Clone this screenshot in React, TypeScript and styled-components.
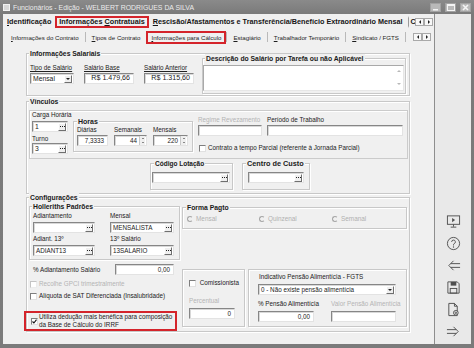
import React from "react";
import styled, { createGlobalStyle } from "styled-components";

const GlobalStyle = createGlobalStyle`
  html, body { margin: 0; padding: 0; }
  body {
    background: #7b7b7b;
    font-family: "Liberation Sans", Arial, sans-serif;
    color: #1e1e1e;
  }
  * { box-sizing: border-box; }
`;

type Dir = "up" | "down" | "left" | "right";

const Window = styled.div`
  width: 474px;
  height: 348px;
  display: flex;
  flex-direction: column;
  background: linear-gradient(#8a8a8a, #7a7a7a 14px, #7b7b7b);
  padding: 0 3px 4px 3px;
  overflow: hidden;
`;

const TitleBar = styled.div`
  height: 14px;
  flex: none;
  display: flex;
  align-items: center;
  gap: 3px;
`;

const AppIcon = styled.span`
  width: 7px;
  height: 7px;
  background: #d8d8d8;
  border: 1px solid #f2f2f2;
  flex: none;
`;

const Title = styled.span`
  color: #ececec;
  font-size: 6.9px;
  white-space: nowrap;
`;

const WinButtons = styled.div`
  margin-left: auto;
  display: flex;
  gap: 4px;
`;

const WinBtn = styled.span`
  width: 11px;
  height: 9px;
  background: #b9b9b9;
  border: 1px solid #a2a2a2;
  display: flex;
  align-items: center;
  justify-content: center;
`;

const Body = styled.div`
  flex: 1;
  display: flex;
  min-height: 0;
`;

const Main = styled.div`
  width: 431px;
  flex: none;
  background: #f0f0f0;
  display: flex;
  flex-direction: column;
`;

const Side = styled.div`
  flex: 1;
  background: #e9e9e9;
  border-left: 1px solid #8e8e8e;
  display: flex;
  flex-direction: column;
  justify-content: flex-end;
  padding-bottom: 2px;
`;

const SideIcon = styled.div`
  height: 22px;
  display: flex;
  align-items: center;
  justify-content: center;
  color: #4f4f4f;
`;

/* tabs */

const TabStrip = styled.div<{ $h: number }>`
  height: ${(p) => p.$h}px;
  flex: none;
  display: flex;
  align-items: center;
`;

const TabList = styled.div`
  flex: 1;
  display: flex;
  align-items: center;
  overflow: hidden;
  min-width: 0;
`;

const MainTab = styled.div<{ $active?: boolean; $divider?: boolean }>`
  flex: none;
  height: 12px;
  display: flex;
  align-items: center;
  padding: 0 2px;
  border: 2px solid ${(p) => (p.$active ? "#d4242b" : "transparent")};
  ${(p) => p.$divider && "border-left: 1px solid #9a9a9a; margin-left: 1px;"}
  font-weight: bold;
  font-size: 7.25px;
  white-space: nowrap;
  color: #151515;
`;

const SubTab = styled.div<{ $active?: boolean; $first?: boolean }>`
  flex: none;
  height: 13px;
  display: flex;
  align-items: center;
  padding: 0 ${(p) => (p.$active ? 3 : 6)}px;
  ${(p) => p.$first && "padding-left: 8px;"}
  border: ${(p) => (p.$active ? "2px solid #d4242b" : "none")};
  font-size: 6.15px;
  white-space: nowrap;
`;

const TabSep = styled.span`
  flex: none;
  width: 1px;
  height: 10px;
  background: #b9b9b9;
`;

const Scroller = styled.div<{ $mr: number }>`
  flex: none;
  display: flex;
  margin-right: ${(p) => p.$mr}px;
`;

const ScrollBtn = styled.span`
  width: 9px;
  height: 8px;
  background: #f8f8f8;
  border: 1px solid #a9a9a9;
  display: flex;
  align-items: center;
  justify-content: center;
`;

const Tri = styled.span<{ $dir: Dir; $s?: number; $c?: string }>`
  flex: none;
  width: 0;
  height: 0;
  border: ${(p) => p.$s ?? 2}px solid transparent;
  ${(p) => {
    const c = p.$c ?? "#222";
    switch (p.$dir) {
      case "down":
        return `border-top-color: ${c}; border-bottom-width: 0;`;
      case "up":
        return `border-bottom-color: ${c}; border-top-width: 0;`;
      case "left":
        return `border-right-color: ${c}; border-left-width: 0;`;
      default:
        return `border-left-color: ${c}; border-right-width: 0;`;
    }
  }}
`;

/* groups and fields */

const Content = styled.div`
  padding-left: 23px;
  display: flex;
  flex-direction: column;
`;

const Group = styled.div`
  position: relative;
  flex: none;
  border: 1px solid #c8c8c8;
  box-shadow: inset 1px 1px 0 #fff, 1px 1px 0 #fff;
`;

const Caption = styled.span<{ $x?: number; $fs?: number }>`
  position: absolute;
  top: -5px;
  left: ${(p) => p.$x ?? 2}px;
  padding: 0 1px;
  background: #f0f0f0;
  font-weight: bold;
  font-size: ${(p) => p.$fs ?? 6.8}px;
  line-height: 9px;
  white-space: nowrap;
  color: #1a1a1a;
`;

const Label = styled.div<{ $disabled?: boolean; $u?: boolean; $w?: number }>`
  font-size: 6.3px;
  line-height: 8px;
  white-space: nowrap;
  color: ${(p) => (p.$disabled ? "#b4b4b4" : "#222")};
  ${(p) => p.$u && "text-decoration: underline;"}
  ${(p) => p.$w && `width: ${p.$w}px; flex: none; padding-left: 6px;`}
`;

const Field = styled.div<{ $gap?: number; $mt?: number }>`
  display: flex;
  flex-direction: column;
  gap: ${(p) => p.$gap ?? 1}px;
  margin-top: ${(p) => p.$mt ?? 0}px;
`;

const Box = styled.div<{ $w: number; $fs?: number }>`
  flex: none;
  width: ${(p) => p.$w}px;
  height: 11px;
  display: flex;
  align-items: center;
  background: #fff;
  border: 1px solid;
  border-color: #868686 #e3e3e3 #e3e3e3 #868686;
  box-shadow: inset 1px 1px 0 #d8d8d8;
  padding: 0 1px 0 2px;
  font-size: ${(p) => p.$fs ?? 6.3}px;
  line-height: 9px;
  color: #222;
  white-space: nowrap;
  overflow: hidden;
`;

const Value = styled.span<{ $right?: boolean }>`
  flex: 1;
  text-align: ${(p) => (p.$right ? "right" : "left")};
  padding-right: ${(p) => (p.$right ? 2 : 0)}px;
`;

const MiniBtn = styled.span`
  flex: none;
  margin-left: auto;
  width: 8px;
  height: 8px;
  background: #efefef;
  border: 1px solid;
  border-color: #fff #6f6f6f #6f6f6f #fff;
  display: flex;
  align-items: center;
  justify-content: center;
`;

const Dots = styled.span`
  width: 5px;
  height: 1px;
  background: repeating-linear-gradient(90deg, #222 0 1px, transparent 1px 2px);
`;

const Spin = styled.span`
  flex: none;
  width: 6px;
  height: 9px;
  display: flex;
  flex-direction: column;
  align-items: center;
  justify-content: space-around;
  background: #efefef;
  border-left: 1px solid #c8c8c8;
`;

const CheckLine = styled.div<{ $mt?: number; $ml?: number; $disabled?: boolean }>`
  display: flex;
  align-items: center;
  gap: 2px;
  margin-top: ${(p) => p.$mt ?? 0}px;
  margin-left: ${(p) => p.$ml ?? 0}px;
  font-size: 6.3px;
  line-height: 8px;
  white-space: nowrap;
  color: ${(p) => (p.$disabled ? "#b4b4b4" : "#222")};
`;

const Check = styled.span<{ $disabled?: boolean }>`
  flex: none;
  width: 7px;
  height: 7px;
  background: #fff;
  border: 1px solid;
  border-color: ${(p) =>
    p.$disabled ? "#c4c4c4 #ececec #ececec #c4c4c4" : "#7e7e7e #e0e0e0 #e0e0e0 #7e7e7e"};
  display: flex;
  align-items: center;
  justify-content: center;
`;

const Radio = styled.span`
  flex: none;
  width: 6px;
  height: 6px;
  border-radius: 50%;
  border: 1px solid;
  border-color: #a5a5a5 transparent #a5a5a5 #a5a5a5;
`;

const RadioLine = styled.div`
  display: flex;
  align-items: center;
  gap: 3px;
  font-size: 6.4px;
  line-height: 8px;
  color: #b0b0b0;
`;

/* sections */

const SalaryGroup = styled(Group)`
  margin-top: 8px;
  width: 384px;
  height: 43px;
  display: flex;
  align-items: flex-start;
`;

const SalaryFields = styled.div`
  display: grid;
  grid-template-columns: 44px 50px 50px;
  column-gap: 10px;
  margin: 10px 0 0 3px;
`;

const DescGroup = styled(Group)`
  margin: 4px 3px 0 auto;
  width: 204px;
  height: 36px;
  padding-top: 6px;
`;

const Memo = styled.div`
  width: 201px;
  height: 26px;
  background: #fff;
  border: 1px solid;
  border-color: #a9a9a9 #e6e6e6 #e6e6e6 #a9a9a9;
  display: flex;
  justify-content: flex-end;
`;

const MemoScroll = styled.div`
  width: 9px;
  display: flex;
  flex-direction: column;
  align-items: center;
  justify-content: space-between;
  padding: 4px 0 5px;
`;

const VinculosGroup = styled(Group)`
  margin-top: 5px;
  width: 384px;
  height: 93px;
  display: flex;
  flex-direction: column;
  align-items: flex-start;
`;

const HoursPanel = styled.div`
  margin: 8px 0 0 2px;
  width: 379px;
  height: 49px;
  border: 1px solid #cbcbcb;
  box-shadow: inset 1px 1px 0 #fff;
  display: flex;
  align-items: flex-start;
`;

const CargaCol = styled.div`
  flex: none;
  width: 36px;
  margin-left: 2px;
  display: flex;
  flex-direction: column;
`;

const HorasGroup = styled(Group)`
  margin: 10px 0 0 5px;
  width: 120px;
  height: 31px;
  display: grid;
  grid-template-columns: 31px 33px 35px;
  column-gap: 6px;
  align-content: start;
  padding: 4px 0 0 3px;
`;

const SchedulePart = styled.div`
  margin: 5px 0 0 5px;
  display: flex;
  flex-direction: column;
`;

const SchedRow = styled.div`
  display: grid;
  grid-template-columns: 64px 136px;
  column-gap: 5px;
`;

const LotacaoRow = styled.div`
  display: flex;
  gap: 9px;
  margin: 4px 0 0 123px;
`;

const SmallGroup = styled(Group)<{ $w: number; $pl: number }>`
  width: ${(p) => p.$w}px;
  height: 27px;
  padding: 8px 0 0 ${(p) => p.$pl}px;
`;

const ConfigGroup = styled(Group)`
  margin-top: 3px;
  width: 384px;
  height: 135px;
  display: flex;
  flex-direction: column;
`;

const ConfigTop = styled.div`
  display: flex;
  align-items: flex-start;
  margin: 8px 0 0 2px;
`;

const HolleGroup = styled(Group)`
  width: 151px;
  height: 54px;
  display: grid;
  grid-template-columns: 62px 64px;
  column-gap: 15px;
  row-gap: 2px;
  align-content: start;
  padding: 5px 0 0 3px;
`;

const PagtoGroup = styled(Group)`
  margin: 1px 0 0 2px;
  width: 225px;
  height: 22px;
  display: grid;
  grid-template-columns: 72px 73px auto;
  align-content: start;
  padding: 7px 0 0 4px;
`;

const ConfigBottom = styled.div`
  display: flex;
  align-items: flex-start;
`;

const LeftCol = styled.div`
  flex: none;
  width: 153px;
  display: flex;
  flex-direction: column;
`;

const AdiantRow = styled.div`
  display: flex;
  align-items: center;
  margin-top: 4px;
`;

const Highlight = styled.div`
  margin: 11px 0 0 -3px;
  width: 153px;
  height: 20px;
  border: 2px solid #d4242b;
  display: flex;
  align-items: center;
  gap: 1px;
  padding-left: 5px;
  font-size: 6.3px;
  line-height: 8px;
  color: #222;
`;

const PlainGroup = styled(Group)<{ $w: number; $ml: number }>`
  margin: 9px 0 0 ${(p) => p.$ml}px;
  width: ${(p) => p.$w}px;
  height: 58px;
  display: flex;
  flex-direction: column;
  align-items: flex-start;
`;

const ComissBody = styled.div`
  padding: 9px 0 0 6px;
  display: flex;
  flex-direction: column;
`;

const PensaoBody = styled.div`
  padding: 3px 0 0 9px;
  display: flex;
  flex-direction: column;
`;

const PensaoLabel = styled(Label)`
  padding-left: 1px;
`;

const PensaoRow = styled.div`
  display: grid;
  grid-template-columns: 56px 65px;
  column-gap: 17px;
  margin-top: 5px;
`;

/* icons */

const Svg = ({ children }: { children: React.ReactNode }) => (
  <svg width="15" height="15" viewBox="0 0 16 16" fill="none" stroke="currentColor" strokeWidth="1">
    {children}
  </svg>
);

const CheckMark = () => (
  <svg width="5" height="5" viewBox="0 0 5 5">
    <path d="M0.5 2.5l1.4 1.5 2.6-3.4" stroke="#111" strokeWidth="1.1" fill="none" />
  </svg>
);

const LookupBtn = () => (
  <MiniBtn>
    <Dots />
  </MiniBtn>
);

const DropBtn = () => (
  <MiniBtn>
    <Tri $dir="down" $s={2} />
  </MiniBtn>
);

const SpinBtn = () => (
  <Spin>
    <Tri $dir="up" $s={1.5} />
    <Tri $dir="down" $s={1.5} />
  </Spin>
);

const Arrows = ({ mr }: { mr: number }) => (
  <Scroller $mr={mr}>
    <ScrollBtn>
      <Tri $dir="left" $s={2} />
    </ScrollBtn>
    <ScrollBtn>
      <Tri $dir="right" $s={2} />
    </ScrollBtn>
  </Scroller>
);

export default function App() {
  return (
    <>
      <GlobalStyle />
      <Window>
        <TitleBar>
          <AppIcon />
          <Title>Funcionários - Edição - WELBERT RODRIGUES DA SILVA</Title>
          <WinButtons>
            <WinBtn>
              <svg width="7" height="7" viewBox="0 0 7 7">
                <rect x="1" y="5" width="5" height="1.5" fill="#f4f4f4" />
              </svg>
            </WinBtn>
            <WinBtn>
              <svg width="8" height="7" viewBox="0 0 8 7">
                <rect x="0.5" y="0.5" width="7" height="6" fill="none" stroke="#f4f4f4" />
                <rect x="0.5" y="0.5" width="7" height="1.5" fill="#f4f4f4" />
              </svg>
            </WinBtn>
            <WinBtn>
              <svg width="7" height="7" viewBox="0 0 7 7">
                <path d="M1 1l5 5M6 1l-5 5" stroke="#f4f4f4" strokeWidth="1.6" />
              </svg>
            </WinBtn>
          </WinButtons>
        </TitleBar>
        <Body>
          <Main>
            <TabStrip $h={15}>
              <TabList>
                <MainTab>
                  <u>I</u>dentificação
                </MainTab>
                <MainTab $active>
                  Informações&nbsp;<u>C</u>ontratuais
                </MainTab>
                <MainTab>
                  <u>R</u>escisão/Afastamentos e Transferência/Benefício Extraordinário Mensal
                </MainTab>
                <MainTab $divider>C</MainTab>
              </TabList>
              <Arrows mr={1} />
            </TabStrip>
            <TabStrip $h={16}>
              <TabList>
                <SubTab $first>
                  <u>I</u>nformações do Contrato
                </SubTab>
                <TabSep />
                <SubTab>
                  <u>T</u>ipos de Contrato
                </SubTab>
                <SubTab $active>
                  <u>I</u>nformações para Cálculo
                </SubTab>
                <TabSep />
                <SubTab>
                  <u>E</u>stagiário
                </SubTab>
                <TabSep />
                <SubTab>
                  <u>T</u>rabalhador Temporário
                </SubTab>
                <TabSep />
                <SubTab>
                  <u>S</u>indicato / FGTS
                </SubTab>
                <TabSep />
              </TabList>
              <Arrows mr={3} />
            </TabStrip>

            <Content>
              <SalaryGroup>
                <Caption>Informações Salariais</Caption>
                <SalaryFields>
                  <Field>
                    <Label $u>Tipo de Salário</Label>
                    <Box $w={44} $fs={6.8}>
                      <Value>Mensal</Value>
                      <DropBtn />
                    </Box>
                  </Field>
                  <Field>
                    <Label $u>Salário Base</Label>
                    <Box $w={50} $fs={7.1}>
                      <Value $right>R$ 1.479,66</Value>
                    </Box>
                  </Field>
                  <Field>
                    <Label $u>Salário Anterior</Label>
                    <Box $w={50} $fs={7.1}>
                      <Value $right>R$ 1.315,60</Value>
                    </Box>
                  </Field>
                </SalaryFields>
                <DescGroup>
                  <Caption>Descrição do Salário por Tarefa ou não Aplicável</Caption>
                  <Memo>
                    <MemoScroll>
                      <Tri $dir="up" $s={2} $c="#b8b8b8" />
                      <Tri $dir="down" $s={2} $c="#b8b8b8" />
                    </MemoScroll>
                  </Memo>
                </DescGroup>
              </SalaryGroup>

              <VinculosGroup>
                <Caption>Vínculos</Caption>
                <HoursPanel>
                  <CargaCol>
                    <Field $gap={2}>
                      <Label>Carga Horária</Label>
                      <Box $w={36} $fs={6.8}>
                        <Value>1</Value>
                        <LookupBtn />
                      </Box>
                    </Field>
                    <Field $gap={0} $mt={3}>
                      <Label>Turno</Label>
                      <Box $w={36} $fs={6.8}>
                        <Value>3</Value>
                        <LookupBtn />
                      </Box>
                    </Field>
                  </CargaCol>
                  <HorasGroup>
                    <Caption $x={3} $fs={7}>
                      Horas
                    </Caption>
                    <Field>
                      <Label>Diárias</Label>
                      <Box $w={31}>
                        <Value $right>7,3333</Value>
                      </Box>
                    </Field>
                    <Field>
                      <Label>Semanais</Label>
                      <Box $w={33}>
                        <Value $right>44</Value>
                        <SpinBtn />
                      </Box>
                    </Field>
                    <Field>
                      <Label>Mensais</Label>
                      <Box $w={35}>
                        <Value $right>220</Value>
                        <SpinBtn />
                      </Box>
                    </Field>
                  </HorasGroup>
                  <SchedulePart>
                    <SchedRow>
                      <Field>
                        <Label $disabled>Regime Revezamento</Label>
                        <Box $w={64} />
                      </Field>
                      <Field>
                        <Label>Período de Trabalho</Label>
                        <Box $w={136} />
                      </Field>
                    </SchedRow>
                    <CheckLine $mt={8} $ml={1}>
                      <Check />
                      Contrato a tempo Parcial (referente à Jornada Parcial)
                    </CheckLine>
                  </SchedulePart>
                </HoursPanel>
                <LotacaoRow>
                  <SmallGroup $w={83} $pl={1}>
                    <Caption $x={3} $fs={6.5}>
                      Código Lotação
                    </Caption>
                    <Box $w={78}>
                      <LookupBtn />
                    </Box>
                  </SmallGroup>
                  <SmallGroup $w={68} $pl={5}>
                    <Caption $x={3} $fs={7.3}>
                      Centro de Custo
                    </Caption>
                    <Box $w={56}>
                      <LookupBtn />
                    </Box>
                  </SmallGroup>
                </LotacaoRow>
              </VinculosGroup>

              <ConfigGroup>
                <Caption>Configurações</Caption>
                <ConfigTop>
                  <HolleGroup>
                    <Caption>Holleriths Padrões</Caption>
                    <Field $gap={2}>
                      <Label>Adiantamento</Label>
                      <Box $w={62}>
                        <LookupBtn />
                      </Box>
                    </Field>
                    <Field $gap={2}>
                      <Label>Mensal</Label>
                      <Box $w={64}>
                        <Value>MENSALISTA</Value>
                        <LookupBtn />
                      </Box>
                    </Field>
                    <Field $gap={2}>
                      <Label>Adiant. 13º</Label>
                      <Box $w={62}>
                        <Value>ADIANT13</Value>
                        <LookupBtn />
                      </Box>
                    </Field>
                    <Field $gap={2}>
                      <Label>13º Salário</Label>
                      <Box $w={64}>
                        <Value>13SALARIO</Value>
                        <LookupBtn />
                      </Box>
                    </Field>
                  </HolleGroup>
                  <PagtoGroup>
                    <Caption $x={3}>Forma Pagto</Caption>
                    <RadioLine>
                      <Radio />
                      Mensal
                    </RadioLine>
                    <RadioLine>
                      <Radio />
                      Quinzenal
                    </RadioLine>
                    <RadioLine>
                      <Radio />
                      Semanal
                    </RadioLine>
                  </PagtoGroup>
                </ConfigTop>
                <ConfigBottom>
                  <LeftCol>
                    <AdiantRow>
                      <Label $w={88}>% Adiantamento Salário</Label>
                      <Box $w={59}>
                        <Value $right>0,00</Value>
                      </Box>
                    </AdiantRow>
                    <CheckLine $mt={5} $ml={3} $disabled>
                      <Check $disabled />
                      Recolhe GPCI trimestralmente
                    </CheckLine>
                    <CheckLine $mt={4} $ml={3}>
                      <Check />
                      Alíquota de SAT Diferenciada (Insalubridade)
                    </CheckLine>
                    <Highlight>
                      <Check>
                        <CheckMark />
                      </Check>
                      <span>
                        Utiliza dedução mais benéfica para composição
                        <br />
                        da Base de Cálculo do IRRF
                      </span>
                    </Highlight>
                  </LeftCol>
                  <PlainGroup $w={63} $ml={2}>
                    <ComissBody>
                      <CheckLine>
                        <Check />
                        &nbsp;Comissionista
                      </CheckLine>
                      <Field $gap={3} $mt={10}>
                        <Label $disabled>Percentual</Label>
                        <Box $w={46}>
                          <Value $right>0</Value>
                        </Box>
                      </Field>
                    </ComissBody>
                  </PlainGroup>
                  <PlainGroup $w={159} $ml={3}>
                    <PensaoBody>
                      <Field $gap={3}>
                        <PensaoLabel>Indicativo Pensão Alimentícia - FGTS</PensaoLabel>
                        <Box $w={138}>
                          <Value>0 - Não existe pensão alimentícia</Value>
                          <DropBtn />
                        </Box>
                      </Field>
                      <PensaoRow>
                        <Field $gap={3}>
                          <Label>% Pensão Alimentícia</Label>
                          <Box $w={56}>
                            <Value $right>0,00</Value>
                          </Box>
                        </Field>
                        <Field $gap={3}>
                          <Label $disabled>Valor Pensão Alimentícia</Label>
                          <Box $w={65} />
                        </Field>
                      </PensaoRow>
                    </PensaoBody>
                  </PlainGroup>
                </ConfigBottom>
              </ConfigGroup>
            </Content>
          </Main>
          <Side>
            <SideIcon>
              <Svg>
                <rect x="1.5" y="2" width="13" height="9" />
                <path d="M6.5 4.3l3.2 2.2-3.2 2.2z" fill="currentColor" stroke="none" />
                <path d="M8 11v2.5M5 14h6" />
              </Svg>
            </SideIcon>
            <SideIcon>
              <Svg>
                <circle cx="8" cy="8" r="6.5" />
                <path d="M6 6.3a2 2 0 1 1 2.7 1.9c-.5.2-.7.6-.7 1.2v.7" />
                <circle cx="8" cy="11.7" r=".7" fill="currentColor" stroke="none" />
              </Svg>
            </SideIcon>
            <SideIcon>
              <Svg>
                <path d="M15 6H5M15 10H5M8 3L3 8l5 5" />
              </Svg>
            </SideIcon>
            <SideIcon>
              <Svg>
                <path d="M2 2h10l2 2v10H2z" />
                <rect x="5" y="2" width="6" height="4" fill="currentColor" stroke="none" />
                <rect x="4.5" y="9" width="7" height="5" />
              </Svg>
            </SideIcon>
            <SideIcon>
              <Svg>
                <path d="M3 1.5h6l3 3v10H3z" />
                <path d="M9 1.5v3h3" />
                <circle cx="10.5" cy="11.5" r="2.5" fill="#e9e9e9" />
                <circle cx="10.5" cy="11.5" r=".8" />
              </Svg>
            </SideIcon>
            <SideIcon>
              <Svg>
                <path d="M1 6h10M1 10h10M8 3l5 5-5 5" />
              </Svg>
            </SideIcon>
          </Side>
        </Body>
      </Window>
    </>
  );
}
